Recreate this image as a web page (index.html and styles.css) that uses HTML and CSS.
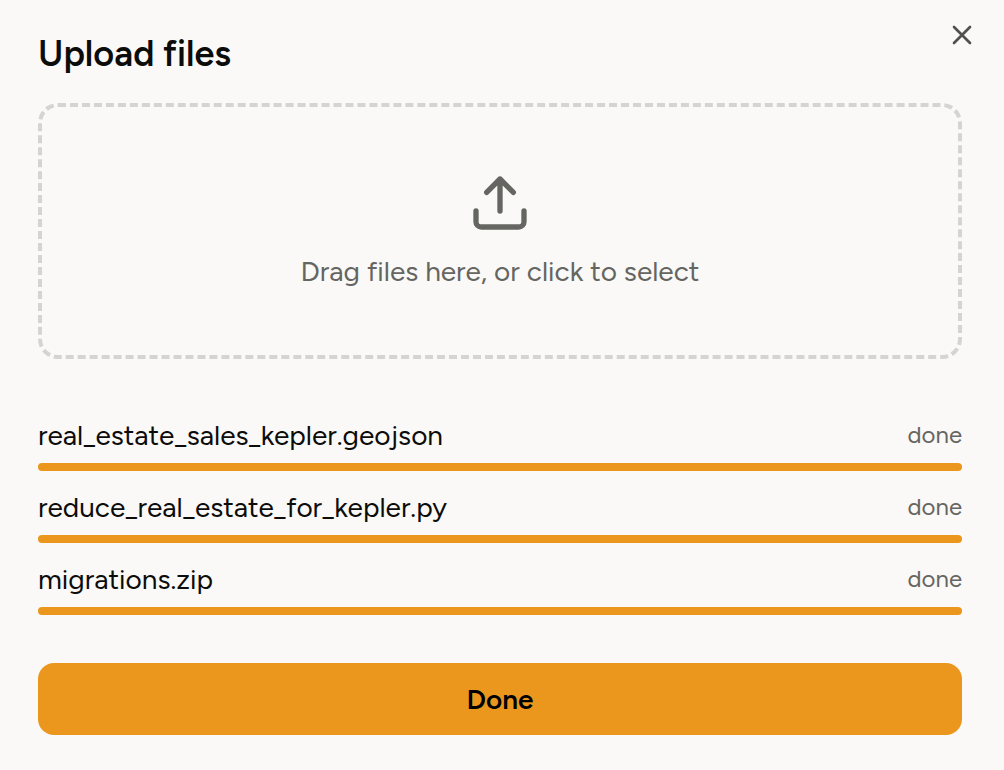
FILE: index.html
```html
<!doctype html>
<html lang="en">
	<head>
		<meta charset="utf-8">
		<title>Upload files</title>
		<link rel="stylesheet" href="styles.css">
	</head>
	<body>
		<main class="dialog">
			<button class="close" type="button" aria-label="Close">
				<svg viewBox="0 0 24 24"><path d="M18 6 6 18M6 6l12 12"/></svg>
			</button>
			<h1>Upload files</h1>
			<label class="dropzone">
				<input type="file" multiple>
				<svg viewBox="0 0 24 24">
					<path d="M21 15v4a2 2 0 0 1-2 2H5a2 2 0 0 1-2-2v-4"/>
					<path d="m17 8-5-5-5 5M12 3v12"/>
				</svg>
				<span>Drag files here, or click to select</span>
			</label>
			<ul class="files">
				<li>
					<div class="row"><label for="file1">real_estate_sales_kepler.geojson</label><span class="status">done</span></div>
					<progress id="file1" value="100" max="100"></progress>
				</li>
				<li>
					<div class="row"><label for="file2">reduce_real_estate_for_kepler.py</label><span class="status">done</span></div>
					<progress id="file2" value="100" max="100"></progress>
				</li>
				<li>
					<div class="row"><label for="file3">migrations.zip</label><span class="status">done</span></div>
					<progress id="file3" value="100" max="100"></progress>
				</li>
			</ul>
			<button class="done" type="button">Done</button>
		</main>
	</body>
</html>
```
FILE: styles.css
```css
* {
	box-sizing: border-box;
}

body {
	margin: 0;
	background: #faf9f7;
	color: #0c0c0b;
	font-family: Figtree, Lato, sans-serif;
	font-size: 28px;
	line-height: 40px;
}

svg {
	display: block;
	fill: none;
	stroke: currentColor;
	stroke-width: 2;
	stroke-linecap: round;
	stroke-linejoin: round;
}

.dialog {
	position: relative;
	padding: 35px 42px 35px 38px;
}

h1 {
	margin: 0 0 30px;
	font-size: 36px;
	font-weight: 600;
	line-height: 38px;
}

.close {
	position: absolute;
	top: 19px;
	right: 26px;
	padding: 0;
	border: 0;
	background: none;
	color: #50504d;
	cursor: pointer;
}

.close svg {
	width: 32px;
	height: 32px;
}

.dropzone {
	display: flex;
	flex-direction: column;
	align-items: center;
	gap: 16px;
	padding: 64px 24px;
	border: 4px dashed #d5d4d1;
	border-radius: 20px;
	color: #656562;
	cursor: pointer;
}

.dropzone input {
	position: absolute;
	width: 1px;
	height: 1px;
	opacity: 0;
}

.dropzone svg {
	width: 64px;
	height: 64px;
}

.files {
	display: flex;
	flex-direction: column;
	gap: 16px;
	margin: 56px 0 48px;
	padding: 0;
	list-style: none;
}

.row {
	display: flex;
	justify-content: space-between;
	margin-bottom: 8px;
}

.status {
	color: #656562;
	font-size: 24px;
}

progress {
	display: block;
	width: 100%;
	height: 8px;
	border: 0;
	border-radius: 4px;
	overflow: hidden;
	background: #e7e5e2;
	appearance: none;
}

progress::-webkit-progress-bar {
	background: #e7e5e2;
}

progress::-webkit-progress-value {
	background: #eb971e;
}

.done {
	display: block;
	width: 100%;
	padding: 16px;
	border: 0;
	border-radius: 16px;
	background: #eb971e;
	color: #000000;
	font: inherit;
	font-weight: 600;
	cursor: pointer;
}
```
